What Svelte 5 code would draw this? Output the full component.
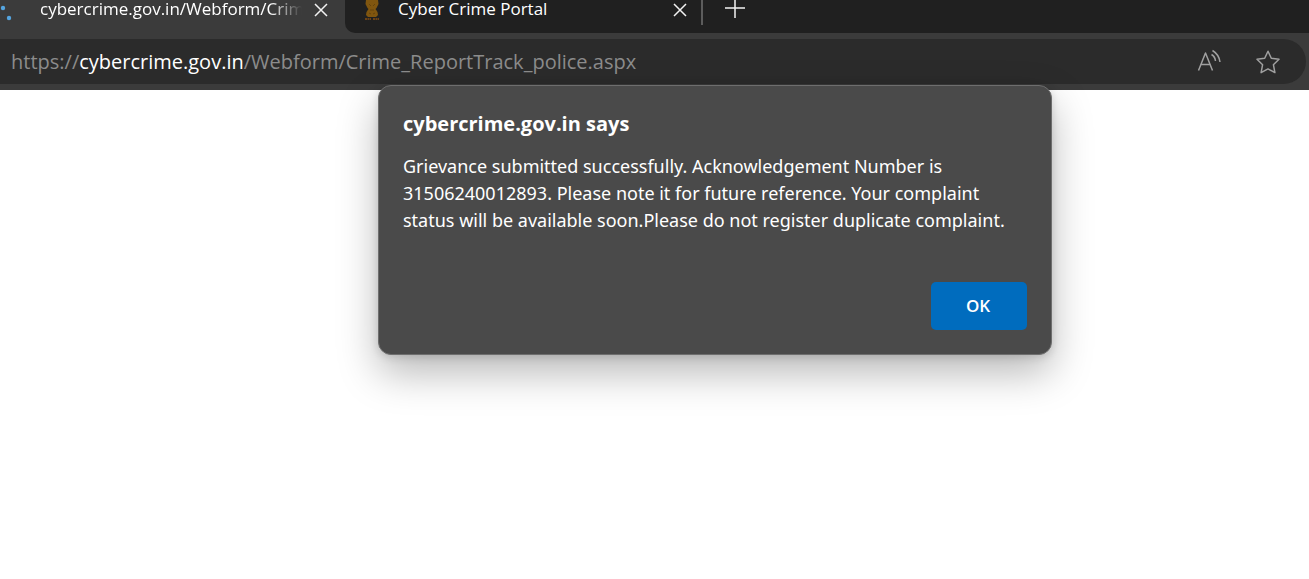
<script>
  let open = $state(true);
  const message =
    'Grievance submitted successfully. Acknowledgement Number is 31506240012893. Please note it for future reference. Your complaint status will be available soon.Please do not register duplicate complaint.';
</script>

<div class="browser">
  <header>
    <div class="strip">
      <div class="tab active">
        <svg class="spinner" width="16" height="24" viewBox="0 0 16 24" aria-hidden="true">
          <circle cx="3" cy="8" r="2.2" />
          <circle cx="9" cy="18" r="2.2" />
        </svg>
        <span class="title fade">cybercrime.gov.in/Webform/Crim</span>
        <button class="icon" aria-label="Close tab">
          <svg width="14" height="14" viewBox="0 0 14 14"><path d="M1 1L13 13M13 1L1 13" /></svg>
        </button>
      </div>
      <div class="rest">
        <div class="tab second">
          <svg class="emblem" width="16" height="22" viewBox="0 0 16 22" aria-hidden="true">
            <path d="M2 0h12l.5 4-2 4-1 1 2 3 .5 3-2 2H4l-2-2 .5-3 2-3-1-1-2-4z" fill="#80560f" />
            <path d="M5 4l2 2M11 4L9 6M6 10h4M5 13l2 1M11 13l-2 1" stroke="#65430c" />
            <path d="M1 19h6M9 19h6" stroke="#6b4216" stroke-width="2" stroke-dasharray="2 .5" />
          </svg>
          <span class="title">Cyber Crime Portal</span>
          <button class="icon" aria-label="Close tab">
            <svg width="14" height="14" viewBox="0 0 14 14"><path d="M1 1L13 13M13 1L1 13" /></svg>
          </button>
        </div>
        <button class="icon plus" aria-label="New tab">
          <svg width="22" height="22" viewBox="0 0 22 22"><path d="M11 1V21M1 11H21" /></svg>
        </button>
      </div>
    </div>
    <div class="toolbar">
      <div class="address">
        <a class="url" href="#top">https://<b>cybercrime.gov.in</b>/Webform/Crime_ReportTrack_police.aspx</a>
        <button class="icon tool" aria-label="Read aloud">
          <svg width="26" height="26" viewBox="0 0 26 26">
            <path d="M1.500 21.500L8.500 4L15.500 21.500M4 15.500H13" />
            <path d="M14.500 5.500Q18 7.500 18.500 12M15.500 1.500Q22 5.500 23 13" />
          </svg>
        </button>
        <button class="icon tool" aria-label="Add to favorites">
          <svg width="26" height="26" viewBox="0 0 26 26">
            <path d="M13 2.300L16.300 9.300L24 10.300L18.400 15.700L19.900 23.600L13 19.900L6.100 23.600L7.600 15.700L2 10.300L9.700 9.300Z" />
          </svg>
        </button>
      </div>
    </div>
  </header>

  {#if open}
    <div class="dialog" role="alertdialog" aria-labelledby="origin" aria-describedby="message">
      <h1 id="origin">cybercrime.gov.in says</h1>
      <p id="message">{message}</p>
      <div class="actions">
        <button class="ok" onclick={() => (open = false)}>OK</button>
      </div>
    </div>
  {/if}
</div>

<style>
  :global(body) {
    background: #fff;
  }
  .browser {
    position: relative;
    min-height: 100vh;
    font-family: 'Open Sans', 'Noto Sans', sans-serif;
    color: #fff;
  }
  header {
    background: #3b3b3b;
  }
  .strip {
    display: flex;
    height: 33px;
  }
  .tab {
    display: flex;
    align-items: flex-start;
    box-sizing: border-box;
  }
  .active {
    width: 345px;
    padding-right: 17px;
  }
  .spinner {
    flex: none;
    margin-right: 24px;
    fill: #55a5e0;
  }
  .title {
    flex: 1;
    min-width: 0;
    padding-bottom: 6px;
    white-space: nowrap;
    font-size: 17px;
    line-height: 18px;
  }
  .fade {
    margin-right: 12px;
    mask-image: linear-gradient(to right, #000 calc(100% - 32px), transparent);
  }
  .icon {
    flex: none;
    display: flex;
    padding: 0;
    border: 0;
    background: none;
  }
  .icon svg {
    fill: none;
    stroke: #f2f2f2;
    stroke-width: 1.5;
  }
  .tab .icon {
    padding-top: 3px;
  }
  .rest {
    flex: 1;
    display: flex;
    background: #202020;
    border-bottom-left-radius: 10px;
  }
  .second {
    width: 358px;
    height: 25px;
    padding: 0 14px 0 19px;
    border-right: 2px solid #5c5c5c;
  }
  .emblem {
    flex: none;
    margin-right: 18px;
  }
  .plus {
    padding: 0 0 0 21px;
    margin-top: -3px;
    align-self: flex-start;
  }
  .toolbar {
    padding: 6px 3px 6px 0;
  }
  .address {
    display: flex;
    align-items: center;
    gap: 32px;
    height: 45px;
    padding: 0 25px 0 11px;
    border-radius: 0 23px 23px 0;
    background: #2b2b2b;
  }
  .url {
    flex: 1;
    min-width: 0;
    overflow: hidden;
    white-space: nowrap;
    color: #8c8c8c;
    font-size: 20px;
    line-height: 28px;
    text-decoration: none;
  }
  .url b {
    font-weight: 400;
    color: #fff;
  }
  .tool svg {
    stroke: #a0a0a0;
    stroke-linejoin: round;
  }
  .dialog {
    position: absolute;
    top: 85px;
    left: 378px;
    width: 674px;
    box-sizing: border-box;
    padding: 24px;
    border: 1px solid #6e6e6e;
    border-radius: 13px;
    background: #4a4a4a;
    box-shadow: 0 18px 40px rgba(0, 0, 0, 0.28), 0 2px 8px rgba(0, 0, 0, 0.14);
  }
  h1 {
    margin: 0;
    font-size: 20px;
    line-height: 28px;
    font-weight: 700;
  }
  p {
    margin: 15px 0 48px;
    font-size: 18px;
    line-height: 27px;
    font-family: 'Noto Sans', 'Open Sans', sans-serif;
  }
  .actions {
    display: flex;
    justify-content: flex-end;
  }
  .ok {
    width: 96px;
    height: 48px;
    padding: 0 2px 2px 0;
    border: 0;
    border-radius: 5px;
    background: #006cbe;
    color: #fff;
    font: 600 17px 'Open Sans', 'Noto Sans', sans-serif;
  }
</style>
